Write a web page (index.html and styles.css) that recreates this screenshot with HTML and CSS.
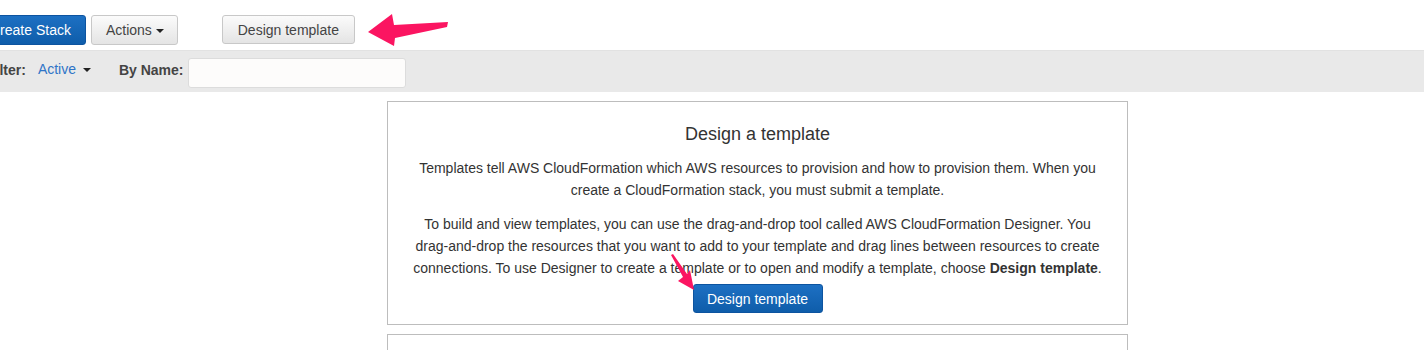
FILE: index.html
```html
<!DOCTYPE html>
<html lang="en">
<head>
<meta charset="UTF-8">
<title>CloudFormation Stacks</title>
<link rel="stylesheet" href="styles.css">
</head>
<body>

<div class="toolbar">
  <button class="btn btn-primary">Create Stack</button>
  <button class="btn">Actions <span class="caret"></span></button>
  <button class="btn btn-design">Design template</button>
  <svg class="callout" width="84" height="36" viewBox="0 0 84 36">
    <polygon points="1,19 25,1 27,12 81,9 80,14 28,25 27,33" fill="#fb1561"/>
  </svg>
</div>

<div class="filterbar">
  <span class="label">Filter:</span>
  <a class="filter-link" href="#">Active <span class="caret"></span></a>
  <span class="label name-label">By Name:</span>
  <input class="name-input" type="text">
  <span class="label count">Showing 1 stack</span>
</div>

<div class="content">
  <div class="panel">
    <h2>Design a template</h2>
    <p>Templates tell AWS CloudFormation which AWS resources to provision and how to provision them. When you create a CloudFormation stack, you must submit a template.</p>
    <p class="last">To build and view templates, you can use the drag-and-drop tool called AWS CloudFormation Designer. You drag-and-drop the resources that you want to add to your template and drag lines between resources to create connections. To use Designer to create a template or to open and modify a template, choose <b>Design template</b>.</p>
    <button class="btn btn-primary btn-center">Design template</button>
    <svg class="pointer" width="30" height="40" viewBox="0 0 30 40">
      <polygon points="1,1 3,0 17,20 20,16 24,36 8,27 13,23" fill="#fb1561"/>
    </svg>
  </div>
  <div class="panel panel-next"></div>
</div>

</body>
</html>
```

FILE: styles.css
```css
body {
  font-family: "Liberation Sans", Arial, sans-serif;
  font-size: 14px;
  color: #333;
  background-color: #fff;
  margin: 0;
  overflow: hidden;
  height: 350px;
}
.toolbar {
  display: flex;
  align-items: flex-start;
  height: 50px;
  box-sizing: border-box;
  padding-top: 15px;
  margin-left: -25px;
}
.btn {
  font-family: "Liberation Sans", Arial, sans-serif;
  font-size: 14px;
  white-space: nowrap;
  height: 30px;
  padding: 0 14px;
  color: #444;
  background: linear-gradient(#fbfbfb, #e4e4e4);
  border: 1px solid #c8c8c8;
  border-radius: 3px;
  margin-right: 5px;
}
.btn-primary {
  color: #fff;
  background: linear-gradient(#1d70c3, #0f5daa);
  border-color: #0d54a0;
}
.btn-design {
  margin-left: 39px;
  height: 29px;
  padding: 0 15px;
}
.caret {
  display: inline-block;
  width: 0;
  height: 0;
  margin-left: 0;
  vertical-align: middle;
  border-top: 4px solid #222;
  border-left: 4px solid transparent;
  border-right: 4px solid transparent;
}
.toolbar .btn:nth-child(2) {
  padding: 0 13px 0 14px;
}
.callout {
  margin-left: 7px;
  margin-top: -2px;
}
.filterbar {
  display: flex;
  align-items: flex-start;
  height: 42px;
  box-sizing: border-box;
  padding: 7px 0 0 0;
  margin-left: -13px;
  background-color: #e9e9e9;
  border-top: 1px solid #e2e2e2;
}
.label {
  font-weight: bold;
  color: #444;
  line-height: 22px;
  margin-top: 1px;
}
.filter-link {
  color: #2f74c7;
  text-decoration: none;
  line-height: 22px;
  margin-left: 12px;
}
.filter-link .caret {
  margin-left: 3px;
}
.name-label {
  margin-left: 28px;
}
.name-input {
  width: 218px;
  height: 30px;
  box-sizing: border-box;
  margin-left: 4px;
  border: 1px solid #dcdcdc;
  border-radius: 3px;
  background-color: #fdfcfb;
}
.count {
  margin-left: auto;
  margin-right: -110px;
}
.content {
  padding-top: 9px;
  padding-left: 387px;
}
.panel {
  position: relative;
  width: 741px;
  box-sizing: border-box;
  border: 1px solid #bdbdbd;
  padding: 21px 25px 11px;
  text-align: center;
}
.panel h2 {
  font-size: 18px;
  font-weight: normal;
  line-height: 22px;
  margin: 0 0 12px;
  color: #333;
}
.panel p {
  line-height: 22px;
  margin: 0 0 12px;
}
.panel p.last {
  margin-bottom: 0;
}
.btn-center {
  display: block;
  margin: 5px auto 0;
  width: 130px;
  height: 29px;
  padding: 0;
}
.pointer {
  position: absolute;
  left: 282px;
  top: 152px;
}
.panel-next {
  margin-top: 9px;
  height: 40px;
}
```
